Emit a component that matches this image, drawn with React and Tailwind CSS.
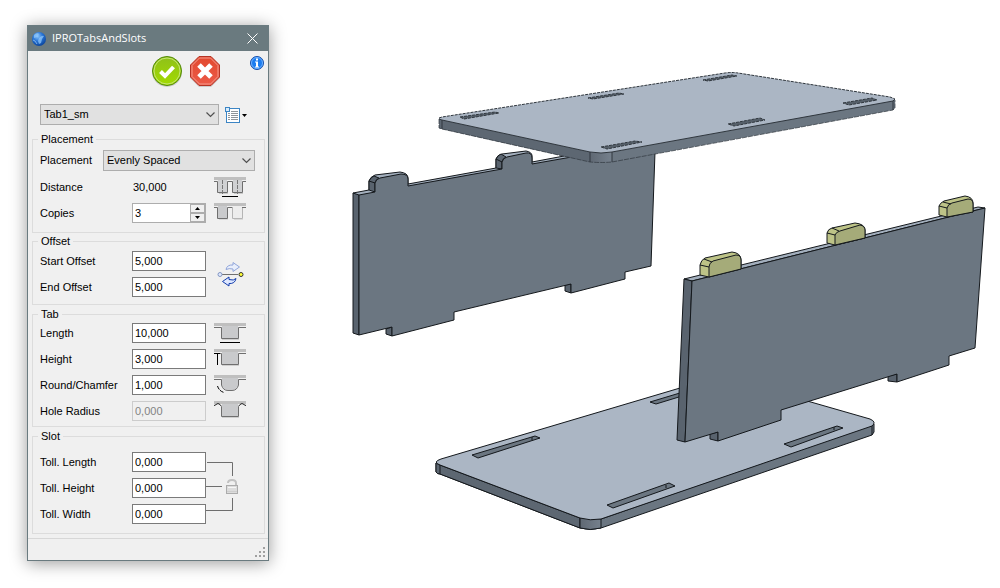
import React, { useState } from 'react';

const Select = ({ id, label, value, onChange, options, className }) => (
  <div className={`relative ${className}`}>
    <select
      id={id}
      aria-label={label}
      value={value}
      onChange={(e) => onChange(e.target.value)}
      className="block h-[21px] w-full appearance-none border border-[#adadad] bg-[#e1e1e1] pr-5 pl-[3px] leading-[19px]"
    >
      {options.map((o) => <option key={o}>{o}</option>)}
    </select>
    <svg width="9" height="6" viewBox="0 0 9 6" className="pointer-events-none absolute top-2 right-1">
      <path d="M.5.5 4.500 4.500 8.500.5" fill="none" stroke="#505050" strokeWidth="1.200" />
    </svg>
  </div>
)

const Group = ({ title, className, children }) => (
  <fieldset className={`mr-[3px] ml-1 border border-[#dcdcdc] px-[7px] ${className}`}>
    <legend className="-ml-0.5 px-[3px] leading-[13px]">{title}</legend>
    {children}
  </fieldset>
)

const Field = ({ id, label, value, disabled, icon }) => {
  const [text, setText] = useState(value)

  return (
    <div className="flex h-5 items-center">
      <label htmlFor={id} className="w-[92px] shrink-0">{label}</label>
      <input
        id={id}
        type="text"
        value={text}
        disabled={disabled}
        onChange={(e) => setText(e.target.value)}
        className="h-5 w-[74px] border border-[#7a7a7a] bg-white px-[2px] disabled:border-[#cccccc] disabled:bg-[#f0f0f0] disabled:text-[#838383]"
      />
      {icon && <span className="ml-2">{icon}</span>}
    </div>
  )
}

const TabIcon = ({ children }) => (
  <svg width="32" height="20" viewBox="0 0 32 20" fill="none">
    <rect width="32" height="3" fill="#bfbfbf" />
    {children}
  </svg>
)

const DistanceIcon = () => (
  <TabIcon>
    <path d="M4 3h9v12H4zM19 3h9v12h-9z" fill="#d0d1d3" />
    <path d="M0 4.500H3.500V15.500H13.500V4.500H18.500V15.500H28.500V4.500H32" stroke="#6f6f6f" />
    <path d="M5 16.500h9M20 16.500h9" stroke="#c8c8c8" />
    <path d="M8.500 3v14M23.500 3v14" stroke="#777" strokeDasharray="4 1" />
    <path d="M8 19.500h16" stroke="#000" />
  </TabIcon>
)

const CopiesIcon = () => (
  <TabIcon>
    <path d="M4 3h9v12H4z" fill="#c9cacc" />
    <path d="M19 3h9v12h-9z" fill="#ededed" />
    <path d="M0 4.500H3.500V15.500H13.500V4.500H18.500" stroke="#6f6f6f" />
    <path d="M18.500 4.500V15.500H28.500V4.500" stroke="#b5b5b5" />
    <path d="M28 4.500h4" stroke="#6f6f6f" />
    <path d="M5 16.500h9M20 16.500h9" stroke="#dadada" />
  </TabIcon>
)

const LengthIcon = () => (
  <TabIcon>
    <path d="M8 3h16v12H8z" fill="#c9cacc" />
    <path d="M0 4.500H7.500V15.500H24.500V4.500H32" stroke="#6f6f6f" />
    <path d="M8 16.500h17" stroke="#cfcfcf" />
    <path d="M6 19.500h20" stroke="#000" />
  </TabIcon>
)

const HeightIcon = () => (
  <TabIcon>
    <path d="M8 3h16v12H8z" fill="#c9cacc" />
    <path d="M0 4.500H7.500V15.500H24.500V4.500H32" stroke="#6f6f6f" />
    <path d="M8 16.500h17" stroke="#cfcfcf" />
    <path d="M0 4.500h6M3.500 4v12" stroke="#000" />
  </TabIcon>
)

const RoundIcon = () => (
  <TabIcon>
    <path d="M8 3h16v7q-1 5-6 5h-4q-5 0-6-5z" fill="#c9cacc" />
    <path d="M0 4.500H7.500V10Q9 15.500 14 15.500H18Q23 15.500 24.500 10V4.500H32" stroke="#6f6f6f" />
    <path d="M3.500 11Q5 16 10 17.500" stroke="#000" strokeDasharray="4 1" />
  </TabIcon>
)

const HoleIcon = () => (
  <TabIcon>
    <path d="M8 3h16v12H8z" fill="#c9cacc" />
    <path d="M7.500 6V15.500H24.500V6" stroke="#6f6f6f" />
    <path d="M0 4.500Q1 4.500 2 3.500 4 1.500 6 3.500L7.500 5.500M24.500 5.500 26 3.500Q28 1.500 30 3.500 31 4.500 32 4.500" stroke="#222" />
    <path d="M8 16.500h17" stroke="#cfcfcf" />
  </TabIcon>
)

const OffsetIcon = () => (
  <svg width="28" height="26" viewBox="0 0 28 26" fill="none">
    <path d="M9 8.500Q10 3.500 16 4V1.500L22.500 6 16 10.500V8Q12 7 9 8.500Z" fill="#e8eefb" stroke="#90a5da" />
    <path d="M5 13.500H21" stroke="#707070" />
    <circle cx="3" cy="13.500" r="2" fill="#dfe8fb" stroke="#8296c4" />
    <circle cx="24" cy="13.500" r="2" fill="#ffff35" stroke="#333" />
    <path d="M19 17.500Q17 20 12 18.500V16L5.500 20.500 12 25V22.500Q18 23 19 17.500Z" fill="#dfe8ff" stroke="#123dad" />
  </svg>
)

const LockLink = () => (
  <svg width="34" height="72" viewBox="0 0 34 72" fill="none">
    <path d="M1 10.500H26.500V24M0 34.500H16M0 58.500H26.500V46" stroke="#6e6e6e" />
    <path d="M22 31Q22 28 26 28Q30 28 30 31V34" stroke="#c2c2c2" strokeWidth="2" />
    <rect x="20.500" y="33.500" width="11" height="8" fill="#dcdcdc" stroke="#ababab" />
    <path d="M22 35.500h8" stroke="#f6f6f6" />
    <path d="M21 39.500h10" stroke="#cdcdcd" />
  </svg>
)

const Globe = () => (
  <svg width="16" height="16" viewBox="0 0 16 16">
    <defs>
      <radialGradient id="globe" cx=".4" cy=".3" r=".7">
        <stop offset="0" stopColor="#8cc8ff" />
        <stop offset=".5" stopColor="#2874d4" />
        <stop offset="1" stopColor="#0c479f" />
      </radialGradient>
    </defs>
    <circle cx="8" cy="8" r="7" fill="url(#globe)" />
    <path d="M3 4q3-3 5-1l-2 3-3 1zM8 7q3-3 5-2l-2 3-1 4-2 1-1-3z" fill="#8fc6f7" opacity=".75" />
    <path d="M2 9q2 0 4 4" stroke="#b7dcff" fill="none" opacity=".6" />
  </svg>
)

const OkIcon = () => (
  <svg width="32" height="32" viewBox="0 0 32 32">
    <defs>
      <linearGradient id="ok" x2="0" y2="1">
        <stop offset="0" stopColor="#8fc01a" />
        <stop offset="1" stopColor="#a2db00" />
      </linearGradient>
    </defs>
    <circle cx="16" cy="17" r="15" fill="#000" opacity=".15" />
    <circle cx="16" cy="16" r="14.500" fill="url(#ok)" stroke="#548a0c" />
    <circle cx="16" cy="16" r="13" fill="none" stroke="#c5e477" />
    <path d="M9.500 16.500 14 21 22.500 12" fill="none" stroke="#fff" strokeWidth="4" />
  </svg>
)

const CancelIcon = () => (
  <svg width="32" height="32" viewBox="0 0 32 32">
    <defs>
      <linearGradient id="cancel" x2="0" y2="1">
        <stop offset="0" stopColor="#e2492f" />
        <stop offset="1" stopColor="#ec5a48" />
      </linearGradient>
    </defs>
    <path d="M10 2h12l9 9v12l-9 9H10l-9-9V11z" fill="#000" opacity=".15" />
    <path d="M10 1.500h12l8.500 8.500v12L22 30.500H10L1.500 22V10z" fill="url(#cancel)" stroke="#b53324" />
    <path d="M10.500 3h11l7.500 7.500v11L21.500 29h-11L3 21.500v-11z" fill="none" stroke="#f59a8c" />
    <path d="M10 10 22 22M22 10 10 22" stroke="#fff" strokeWidth="5" />
  </svg>
)

const InfoIcon = () => (
  <svg width="16" height="16" viewBox="0 0 16 16">
    <circle cx="8" cy="8" r="6.500" fill="#1c7df0" stroke="#1a4fa8" />
    <circle cx="8" cy="8" r="5.500" fill="none" stroke="#6fb2ff" />
    <path d="M7 3.500h2v2H7zM6 6.500h3v5h1v1H6v-1h1v-4H6z" fill="#fff" />
  </svg>
)

const PresetIcon = () => (
  <svg width="24" height="18" viewBox="0 0 24 18" fill="none">
    <rect x="1.500" y="2.500" width="13" height="14" fill="#fff" stroke="#3c85c4" />
    <path d="M6 5.500h7M6 7.500h7M6 9.500h7M6 11.500h7M6 13.500h7M3 7.500h2M3 9.500h2M3 11.500h2M3 13.500h2" stroke="#8f9499" />
    <rect x=".500" y="1.500" width="4" height="4" fill="#d9ecfb" stroke="#3c85c4" />
    <path d="M17 8h5l-2.500 3z" fill="#000" />
  </svg>
)

const SizeGrip = () => (
  <svg width="12" height="12" viewBox="0 0 12 12" fill="#a0a0a0">
    <path d="M9 1h2v2H9zM5 5h2v2H5zM9 5h2v2H9zM1 9h2v2H1zM5 9h2v2H5zM9 9h2v2H9z" />
  </svg>
)

const topSlots = [
  "460,117 495,112 499,113 464,119",
  "588,98 619,93 624,94 593,99",
  "703,80 732,75 737,76 708,81",
  "601,147 635,141 642,142 607,149",
  "728,124 760,118 765,120 734,126",
  "843,103 872,98 877,100 849,105",
]

const bottomSlots = [
  "472,455 535,436 540,438 478,458",
  "650,402 713,383 718,385 656,404",
  "607,505 669,483 675,486 613,508",
  "784,444 837,426 843,428 791,447",
]

// outer silhouette, front face and the edge between the side and the top of each selected tab
const selectedTabs = [
  {
    body: "M700 275V265Q701 260 705 258L732 252Q741 253 741 260V269L709 277Z",
    face: "M709 277V267Q709 263 713 261L736 255Q741 255 741 260V269Z",
    edge: "M700 265 709 267M704 259 712 262",
  },
  {
    body: "M827 243V233Q828 229 832 228L855 223Q865 224 865 230V238L835 245Z",
    face: "M835 245V235Q836 232 840 231L860 225Q865 226 865 230V238Z",
    edge: "M827 233 835 235M832 228 839 231",
  },
  {
    body: "M939 215V206Q940 203 944 201L965 196Q973 197 973 203V212L947 217Z",
    face: "M947 217V208Q948 204 952 203L968 199Q973 199 973 204V212Z",
    edge: "M939 206 947 208M943 202 951 204",
  },
]

const Scene = () => (
  <svg
    viewBox="269 0 731 588"
    role="img"
    aria-label="Exploded view of the assembly"
    className="block h-auto w-full"
    strokeLinejoin="round"
    stroke="#14181c"
    fill="#6b7681"
  >
    <defs>
      <linearGradient id="corner">
        <stop offset="0" stopColor="#5f6873" />
        <stop offset="1" stopColor="#76818d" />
      </linearGradient>
    </defs>

    {/* rear panel */}
    <path d="M353 193 369 190V181Q370 177 375 175L400 172Q408 173 408 178V184L496 168V159Q497 155 502 154L526 151Q532 152 532 156V162L580 153V165L359 200Z" fill="#a3afbd" />
    <path d="M369 190V181Q371 177 374 176L379 178Q375 180 375 183V192ZM496 168V159Q498 155 501 154L506 157Q502 159 502 162V169ZM353 193 359 195V335L353 333ZM386 329V334L392 336V327ZM565 285V291L571 293V284Z" fill="#59636e" />
    <path d="M359 195 375 192V183Q376 179 380 178L401 174Q408 174 408 179V186L502 169V162Q503 158 507 157L526 153Q532 152 532 158V164L600 152H655L651 266 625 272V279L571 293V284L454 312V320L392 336V327L359 335Z" />
    <path d="M369 181 375 183M496 159 502 162" />

    {/* top plate, the far edges are dashed */}
    <g stroke="none">
      <path d="M439 119V128L442 129 590 162Q601 163 612 162L893 110 895 108V99L612 152 590 152Z" />
      <path d="M439 118V128L442 129 590 162V152L442 120Z" fill="#5d6772" />
      <path d="M590 152V162Q601 163 612 162V152Z" fill="url(#corner)" />
      <path d="M442 117 725 73Q732 72 738 73L890 97Q897 99 893 101L612 152Q601 154 590 152L442 120Q437 118 442 117Z" fill="#abb6c4" />
    </g>
    <g fill="none" stroke="#30373e">
      <path d="M439 119V128L442 129 590 162Q601 163 612 162L893 110 895 108V100" strokeDasharray="5 1" strokeOpacity=".7" />
      <path d="M439 119 442 120 590 152Q601 154 612 152L893 101 895 99" />
      <path d="M439 118 442 117 725 73Q732 72 738 73L890 97 895 99" strokeDasharray="3 1" />
      <path d="M442 120V129M590 152V162M612 152V162M893 101V110" />
    </g>
    <g fill="#56606a" stroke="#30373e" strokeDasharray="3 1">
      {topSlots.map((points) => <polygon key={points} points={points} />)}
    </g>

    {/* bottom plate */}
    <path d="M436 463V472Q437 474 440 474L580 528Q590 531 601 528L872 435 874 432V424L601 519H580Z" />
    <path d="M436 463V472Q437 474 440 474L580 528V518L440 465Z" fill="#5d6772" />
    <path d="M580 518V528Q590 531 601 528V519Z" fill="url(#corner)" />
    <path d="M441 459 680 388 762 388 870 419Q877 422 872 426L601 519Q590 521 580 518L440 465Q432 462 441 459Z" fill="#abb6c4" />
    <path d="M440 465V474M872 426V435" />
    {bottomSlots.map((points) => <polygon key={points} points={points} />)}
    <path d="M532 437V440M666 485V488M834 427V430" />

    {/* front panel */}
    <path d="M684 279 978 207 985 208 692 281Z" fill="#a3afbd" />
    <path d="M684 279 692 281 685 442 677 440ZM710 434V439L718 441V432ZM888 376V381L897 382V374Z" fill="#59636e" />
    <path d="M692 281 985 208 975 348 949 356V365L897 382V374L781 410V420L718 441V432L685 442Z" />
    {selectedTabs.map(({ body, face, edge }) => (
      <g key={body}>
        <path d={body} fill="#bdc387" />
        <path d={face} fill="#a5ab79" />
        <path d={edge} />
      </g>
    ))}
  </svg>
)

const App = () => {
  const [preset, setPreset] = useState("Tab1_sm")
  const [placement, setPlacement] = useState("Evenly Spaced")
  const [copies, setCopies] = useState(3)

  return (
    <div className="flex min-h-screen items-start bg-white font-['Liberation_Sans',sans-serif] text-[11px] text-black">
      <aside className="my-[25px] ml-[27px] w-[242px] shrink-0 border border-[#6a7b80] bg-[#f0f0f0] shadow-[0_2px_16px_rgba(0,0,0,0.4)]">
        <header className="flex h-[25px] items-center bg-[#6a7a7f] pl-[3px] text-white">
          <Globe />
          <h1 className="ml-[5px] flex-1 font-['Open_Sans',sans-serif] text-[11px]">IPROTabsAndSlots</h1>
          <button aria-label="Close" className="mr-2.5">
            <svg width="11" height="11" viewBox="0 0 11 11"><path d="M.5.5 10.500 10.500M10.500.5.500 10.500" stroke="#fff" /></svg>
          </button>
        </header>

        <div className="flex items-start justify-end gap-1.5 pt-1 pr-[3px]">
          <button aria-label="OK"><OkIcon /></button>
          <button aria-label="Cancel"><CancelIcon /></button>
          <button aria-label="Info" className="ml-[22px]"><InfoIcon /></button>
        </div>

        <div className="mt-[17px] mb-2 flex items-center pl-3">
          <Select label="Preset" value={preset} onChange={setPreset} options={["Tab1_sm"]} className="w-[179px]" />
          <button aria-label="Presets" className="ml-1.5"><PresetIcon /></button>
        </div>

        <Group title="Placement" className="pt-1 pb-[9px]">
          <div className="flex items-center">
            <label htmlFor="placement" className="w-[63px]">Placement</label>
            <Select id="placement" value={placement} onChange={setPlacement} options={["Evenly Spaced"]} className="w-[152px]" />
          </div>
          <div className="mt-1.5 flex h-5 items-center">
            <span className="w-[93px]">Distance</span>
            <output className="w-[73px]">30,000</output>
            <span className="ml-2"><DistanceIcon /></span>
          </div>
          <div className="mt-1.5 flex h-5 items-center">
            <label htmlFor="copies" className="w-[92px]">Copies</label>
            <div className="flex h-5 w-[74px] border border-[#adadad] bg-white">
              <input id="copies" type="text" value={copies} onChange={(e) => setCopies(e.target.value)} className="w-[57px] px-[2px]" />
              <div className="flex flex-1 flex-col">
                <button aria-label="More copies" onClick={() => setCopies((c) => Number(c) + 1)} className="flex flex-1 items-center justify-center border border-[#adadad] bg-[#f0f0f0]">
                  <svg width="5" height="3" viewBox="0 0 5 3"><path d="M0 3h5L2.500 0z" /></svg>
                </button>
                <button aria-label="Fewer copies" onClick={() => setCopies((c) => Number(c) - 1)} className="flex flex-1 items-center justify-center border border-[#adadad] bg-[#f0f0f0]">
                  <svg width="5" height="3" viewBox="0 0 5 3"><path d="M0 0h5L2.500 3z" /></svg>
                </button>
              </div>
            </div>
            <span className="ml-2"><CopiesIcon /></span>
          </div>
        </Group>

        <Group title="Offset" className="mt-0.5 pt-[3px] pb-[7px]">
          <div className="flex items-center">
            <div className="space-y-1.5">
              <Field id="start-offset" label="Start Offset" value="5,000" />
              <Field id="end-offset" label="End Offset" value="5,000" />
            </div>
            <button aria-label="Swap offsets" className="ml-[11px]"><OffsetIcon /></button>
          </div>
        </Group>

        <Group title="Tab" className="mt-[3px] pt-0.5 pb-[5px]">
          <div className="space-y-1.5">
            <Field id="tab-length" label="Length" value="10,000" icon={<LengthIcon />} />
            <Field id="tab-height" label="Height" value="3,000" icon={<HeightIcon />} />
            <Field id="tab-round" label="Round/Chamfer" value="1,000" icon={<RoundIcon />} />
            <Field id="hole-radius" label="Hole Radius" value="0,000" disabled icon={<HoleIcon />} />
          </div>
        </Group>

        <Group title="Slot" className="mt-[3px] pt-[9px] pb-[9px]">
          <div className="flex">
            <div className="space-y-1.5">
              <Field id="toll-length" label="Toll. Length" value="0,000" />
              <Field id="toll-height" label="Toll. Height" value="0,000" />
              <Field id="toll-width" label="Toll. Width" value="0,000" />
            </div>
            <button aria-label="Link tolerances"><LockLink /></button>
          </div>
        </Group>

        <footer className="mt-1 flex h-[22px] items-end justify-end border-t border-[#d7d7d7] pr-0.5 pb-0.5">
          <SizeGrip />
        </footer>
      </aside>

      <main className="min-w-0 flex-1">
        <Scene />
      </main>
    </div>
  )
}

export default App;
